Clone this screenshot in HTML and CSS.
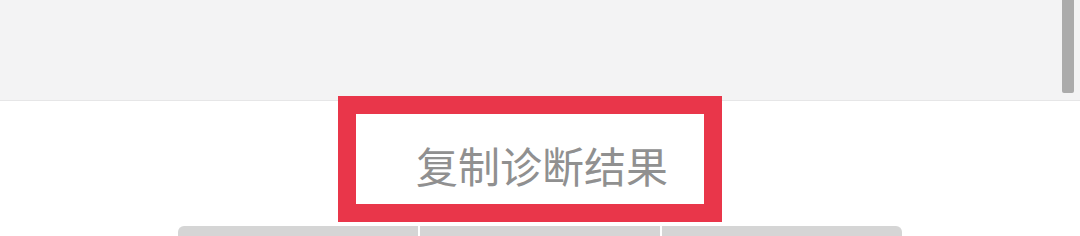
FILE: index.html
```html
<!DOCTYPE html>
<html lang="zh-CN">
<head>
<meta charset="utf-8">
<title>复制诊断结果</title>
<link rel="stylesheet" href="styles.css">
</head>
<body>
<div class="panel">
  <div class="scrollbar"></div>
</div>
<div class="footer">
  <div class="highlight">
    <span class="label">复制诊断结果</span>
  </div>
  <div class="tabs">
    <div class="tab"></div>
    <div class="tab"></div>
    <div class="tab"></div>
  </div>
</div>
</body>
</html>
```
FILE: styles.css
```css
html, body {
  margin: 0;
  padding: 0;
  background: #ffffff;
  width: 1080px;
  height: 236px;
  overflow: hidden;
  font-family: "Noto Sans CJK SC", "Noto Sans", sans-serif;
}

.panel {
  position: relative;
  height: 100px;
  background: #f3f3f4;
  border-bottom: 1px solid #e6e6e7;
}

.scrollbar {
  position: absolute;
  left: 1062px;
  top: 0;
  width: 12px;
  height: 93px;
  background: #ababab;
  border-radius: 0 0 2px 2px;
}

.footer {
  display: flex;
  flex-direction: column;
  align-items: center;
}

.highlight {
  position: relative;
  z-index: 1;
  margin-top: -5px;
  margin-left: -20px;
  box-sizing: border-box;
  width: 384px;
  height: 126px;
  border: 18px solid #e9364a;
  background: #ffffff;
  display: flex;
  align-items: center;
  justify-content: center;
  padding: 12px 0 0 24px;
}

.label {
  font-size: 42px;
  line-height: 1;
  color: #909090;
  letter-spacing: 0;
  white-space: nowrap;
}

.tabs {
  margin-top: 4px;
  display: flex;
  gap: 2px;
  width: 724px;
  height: 12px;
}

.tab {
  flex: 1;
  background: #d5d5d5;
}

.tab:first-child {
  border-top-left-radius: 6px;
}

.tab:last-child {
  border-top-right-radius: 6px;
}
```
